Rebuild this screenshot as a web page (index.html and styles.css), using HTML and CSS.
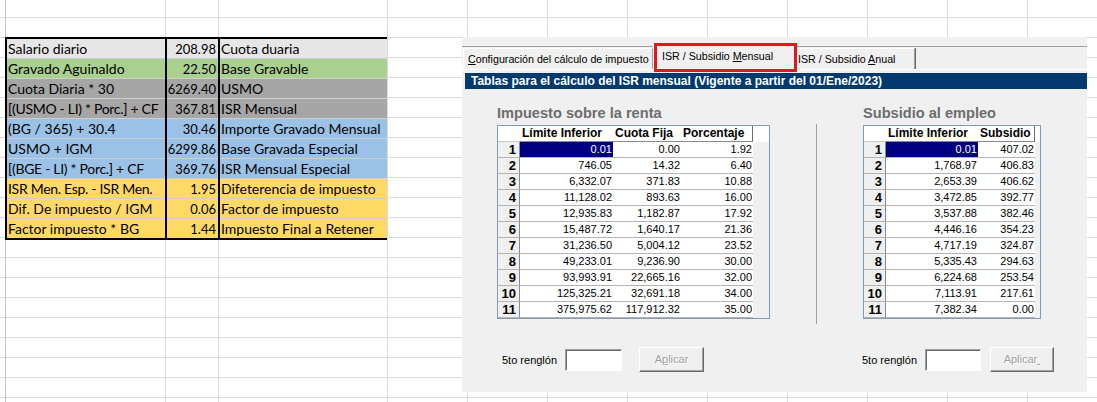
FILE: index.html
```html
<!DOCTYPE html>
<html lang="es">
<head>
<meta charset="utf-8">
<title>ISR / Subsidio Mensual</title>
<link rel="stylesheet" href="styles.css">
</head>
<body>
<div class="sheet">
  <div class="sheet-left">
    <div class="calc">
      <div class="c r-light">Salario diario</div><div class="c num r-light">208.98</div><div class="c r-light">Cuota duaria</div>
      <div class="c r-green">Gravado Aguinaldo</div><div class="c num r-green">22.50</div><div class="c r-green">Base Gravable</div>
      <div class="c r-gray">Cuota Diaria * 30</div><div class="c num r-gray">6269.40</div><div class="c r-gray">USMO</div>
      <div class="c r-gray tight">[(USMO - LI) * Porc.] + CF</div><div class="c num r-gray">367.81</div><div class="c r-gray">ISR Mensual</div>
      <div class="c r-blue">(BG / 365) + 30.4</div><div class="c num r-blue">30.46</div><div class="c r-blue">Importe Gravado Mensual</div>
      <div class="c r-blue">USMO + IGM</div><div class="c num r-blue">6299.86</div><div class="c r-blue">Base Gravada Especial</div>
      <div class="c r-blue tight">[(BGE - LI) * Porc.] + CF</div><div class="c num r-blue">369.76</div><div class="c r-blue">ISR Mensual Especial</div>
      <div class="c r-yellow tight">ISR Men. Esp. - ISR Men.</div><div class="c num r-yellow">1.95</div><div class="c r-yellow">Difeterencia de impuesto</div>
      <div class="c r-yellow">Dif. De impuesto / IGM</div><div class="c num r-yellow">0.06</div><div class="c r-yellow">Factor de impuesto</div>
      <div class="c r-yellow last">Factor impuesto * BG</div><div class="c num r-yellow last">1.44</div><div class="c r-yellow last">Impuesto Final a Retener</div>
    </div>
  </div>
  <div class="sheet-right"></div>
</div>

<div class="dialog">
  <div class="tabs">
    <div class="tab tab1"><u>C</u>onfiguración del cálculo de impuesto</div>
    <div class="tab tab2 active">ISR / Subsidio <u>M</u>ensual<span class="mark"></span></div>
    <div class="tab tab3">ISR / Subsidio <u>A</u>nual</div>
  </div>
  <div class="band">Tablas para el cálculo del ISR mensual (Vigente a partir del 01/Ene/2023)</div>
  <div class="panel">
    <div class="sections">
      <div class="section isr">
        <div class="heading">Impuesto sobre la renta</div>
        <div class="tbl tbl-isr">
          <div class="hc corner"></div><div class="hc">Límite Inferior</div><div class="hc">Cuota Fija</div><div class="hc hc-end">Porcentaje</div><div class="hc fill"></div>
          <div class="rh">1</div><div class="d sel">0.01</div><div class="d">0.00</div><div class="d">1.92</div><div class="f"></div>
          <div class="rh">2</div><div class="d">746.05</div><div class="d">14.32</div><div class="d">6.40</div><div class="f"></div>
          <div class="rh">3</div><div class="d">6,332.07</div><div class="d">371.83</div><div class="d">10.88</div><div class="f"></div>
          <div class="rh">4</div><div class="d">11,128.02</div><div class="d">893.63</div><div class="d">16.00</div><div class="f"></div>
          <div class="rh">5</div><div class="d">12,935.83</div><div class="d">1,182.87</div><div class="d">17.92</div><div class="f"></div>
          <div class="rh">6</div><div class="d">15,487.72</div><div class="d">1,640.17</div><div class="d">21.36</div><div class="f"></div>
          <div class="rh">7</div><div class="d">31,236.50</div><div class="d">5,004.12</div><div class="d">23.52</div><div class="f"></div>
          <div class="rh">8</div><div class="d">49,233.01</div><div class="d">9,236.90</div><div class="d">30.00</div><div class="f"></div>
          <div class="rh">9</div><div class="d">93,993.91</div><div class="d">22,665.16</div><div class="d">32.00</div><div class="f"></div>
          <div class="rh">10</div><div class="d">125,325.21</div><div class="d">32,691.18</div><div class="d">34.00</div><div class="f"></div>
          <div class="rh">11</div><div class="d">375,975.62</div><div class="d">117,912.32</div><div class="d">35.00</div><div class="f"></div>
        </div>
      </div>
      <div class="vsep"></div>
      <div class="section sub">
        <div class="heading">Subsidio al empleo</div>
        <div class="tbl tbl-sub">
          <div class="hc corner"></div><div class="hc">Límite Inferior</div><div class="hc hc-end">Subsidio</div><div class="hc fill"></div>
          <div class="rh">1</div><div class="d sel">0.01</div><div class="d">407.02</div><div class="f"></div>
          <div class="rh">2</div><div class="d">1,768.97</div><div class="d">406.83</div><div class="f"></div>
          <div class="rh">3</div><div class="d">2,653.39</div><div class="d">406.62</div><div class="f"></div>
          <div class="rh">4</div><div class="d">3,472.85</div><div class="d">392.77</div><div class="f"></div>
          <div class="rh">5</div><div class="d">3,537.88</div><div class="d">382.46</div><div class="f"></div>
          <div class="rh">6</div><div class="d">4,446.16</div><div class="d">354.23</div><div class="f"></div>
          <div class="rh">7</div><div class="d">4,717.19</div><div class="d">324.87</div><div class="f"></div>
          <div class="rh">8</div><div class="d">5,335.43</div><div class="d">294.63</div><div class="f"></div>
          <div class="rh">9</div><div class="d">6,224.68</div><div class="d">253.54</div><div class="f"></div>
          <div class="rh">10</div><div class="d">7,113.91</div><div class="d">217.61</div><div class="f"></div>
          <div class="rh">11</div><div class="d">7,382.34</div><div class="d">0.00</div><div class="f"></div>
        </div>
      </div>
    </div>
    <div class="controls">
      <div class="group g-left">
        <span class="lbl">5to renglón</span>
        <span class="input"></span>
        <span class="btn">A<u>p</u>licar</span>
      </div>
      <div class="group g-right">
        <span class="lbl">5to renglón</span>
        <span class="input"></span>
        <span class="btn">Aplicar<u>&nbsp;</u></span>
      </div>
    </div>
  </div>
</div>
</body>
</html>
```

FILE: styles.css
```css
* { box-sizing: border-box; }

html, body {
  margin: 0;
  padding: 0;
  background: #ffffff;
}

body {
  width: 1097px;
  height: 402px;
  overflow: hidden;
  position: relative;
  font-family: "Liberation Sans", Arial, sans-serif;
}

/* ---------- spreadsheet ---------- */
.sheet {
  display: flex;
  height: 402px;
}

.sheet-left {
  width: 387px;
  flex: none;
  background-color: #fff;
  background-image:
    linear-gradient(#c6c6c6, #c6c6c6),
    linear-gradient(#dadada, #dadada),
    linear-gradient(#dadada, #dadada),
    repeating-linear-gradient(to bottom, transparent 0 17px, #dadada 17px 18px, transparent 18px 20px);
  background-size: 1px 100%, 1px 100%, 1px 100%, 100% 100%;
  background-position: 5px 0, 165px 0, 218px 0, 0 0;
  background-repeat: no-repeat;
  padding-top: 37px;
  padding-left: 5px;
}

.sheet-right {
  flex: 1;
  background-color: #fff;
  background-image:
    repeating-linear-gradient(to right, #dadada 0 1px, transparent 1px 80px),
    repeating-linear-gradient(to bottom, transparent 0 17px, #dadada 17px 18px, transparent 18px 20px);
}

.calc {
  display: grid;
  grid-template-columns: 158px 51px 167px;
  column-gap: 2px;
  width: max-content;
  border: 2px solid #000;
  background: #000;
  font-family: Lato, "Liberation Sans", sans-serif;
  font-size: 14px;
  color: #000;
}

.c {
  height: 20px;
  line-height: 20px;
  border-bottom: 1px solid #cfcfcf;
  padding-left: 1px;
  white-space: nowrap;
  overflow: visible;
}

.c.tight { letter-spacing: -0.3px; }

.c.last {
  height: 19px;
  border-bottom: none;
}

.c.num {
  text-align: right;
  padding: 0 2px 0 0;
  font-size: 13px;
}

.r-light  { background: #e7e6e6; }
.r-green  { background: #a9d08e; }
.r-gray   { background: #a6a6a6; }
.r-blue   { background: #9bc2e6; }
.r-yellow { background: #ffd966; }

/* ---------- dialog window ---------- */
.dialog {
  position: absolute;
  left: 462px;
  top: 37px;
  width: 625px;
  height: 355px;
  background: #f0f0f0;
  color: #000;
  display: flex;
  flex-direction: column;
}

.tabs {
  height: 33px;
  flex: none;
  display: flex;
  align-items: flex-end;
  padding-left: 1px;
  border-bottom: 1px solid #ffffff;
  background-image: linear-gradient(#a0a0a0, #a0a0a0);
  background-size: 100% 1px;
  background-position: 0 9px;
  background-repeat: no-repeat;
  font-size: 10.7px;
}

.tab {
  height: 21px;
  line-height: 20px;
  background: #f0f0f0;
  border-top: 1px solid #ffffff;
  border-left: 1px solid #ffffff;
  border-right: 1px solid #a0a0a0;
  white-space: nowrap;
  position: relative;
}

.tab1 { width: 190px; padding-left: 4px; }
.tab2 { width: 142px; padding-left: 8px; }
.tab3 {
  width: 120px;
  padding-left: 2px;
  box-shadow: 1px 0 0 #696969;
}

.tab.active {
  height: 26px;
  margin-bottom: -1px;
  line-height: 22px;
  z-index: 1;
}

.mark {
  position: absolute;
  left: 0;
  top: -2px;
  width: 143px;
  height: 29px;
  border: 3px solid #e3161e;
  pointer-events: none;
}

.band {
  flex: none;
  margin: 3px 0 0 3px;
  height: 16px;
  line-height: 16px;
  background: #023a70;
  color: #ffffff;
  font-weight: bold;
  font-size: 12px;
  padding-left: 6px;
  white-space: nowrap;
}

.panel {
  flex: 1;
  padding-left: 35px;
  display: flex;
  flex-direction: column;
}

.sections {
  display: flex;
  align-items: flex-start;
  padding-top: 15px;
}

.section.isr { width: 273px; }
.section.sub { width: 178px; margin-left: 46px; }

.vsep {
  width: 1px;
  height: 200px;
  margin-top: 20px;
  margin-left: 46px;
  background: #a0a0a0;
}

.heading {
  height: 18px;
  line-height: 18px;
  margin-bottom: 3px;
  font-size: 14.6px;
  font-weight: bold;
  color: #6d6d6d;
  white-space: nowrap;
}

.tbl {
  display: grid;
  border: 1px solid #7f9cbd;
  background: #f0f0f0;
}

.tbl-isr { grid-template-columns: 22px 93px 68px 72px 16px; }
.tbl-sub { grid-template-columns: 22px 92px 57px 5px; }

.hc {
  height: 16px;
  line-height: 15px;
  background: #ffffff;
  border-bottom: 1px solid #8a8a8a;
  font-size: 12px;
  font-weight: bold;
  padding-left: 2px;
  white-space: nowrap;
  overflow: hidden;
}

.hc.corner { border-bottom: 1px solid #c8c8c8; }
.hc.hc-end { border-right: 1px solid #6a6a6a; }
.hc.fill { border-bottom: none; }

.rh {
  height: 16px;
  line-height: 15px;
  background: #f0f0f0;
  border-right: 1px solid #8a8a8a;
  border-bottom: 1px solid #b4b4b4;
  font-size: 13px;
  font-weight: bold;
  text-align: right;
  padding-right: 3px;
}

.d {
  height: 16px;
  line-height: 15px;
  background: #ffffff;
  border-bottom: 1px solid #b4b4b4;
  font-size: 11px;
  text-align: right;
  padding-right: 1px;
  white-space: nowrap;
}

.d.sel {
  background: #000080;
  color: #ffffff;
}

.f { height: 16px; }

.controls {
  display: flex;
  align-items: center;
  margin-top: 23px;
  padding-left: 5px;
  font-size: 11px;
}

.group {
  display: flex;
  align-items: center;
}

.g-right { margin-left: 158px; }

.lbl {
  width: 63px;
  white-space: nowrap;
}

.input {
  width: 57px;
  height: 22px;
  background: #ffffff;
  border: 1px solid;
  border-color: #a0a0a0 #ffffff #ffffff #a0a0a0;
  box-shadow: inset 1px 1px 0 #696969;
}

.g-right .input { width: 56px; }

.btn {
  width: 65px;
  height: 25px;
  margin-left: 17px;
  background: #f0f0f0;
  border: 1px solid;
  border-color: #ffffff #696969 #696969 #ffffff;
  box-shadow: inset -1px -1px 0 #a0a0a0;
  color: #a0a0a0;
  text-shadow: 1px 1px 0 #ffffff;
  text-align: center;
  line-height: 23px;
}

.g-right .btn { width: 64px; margin-left: 9px; }
```
